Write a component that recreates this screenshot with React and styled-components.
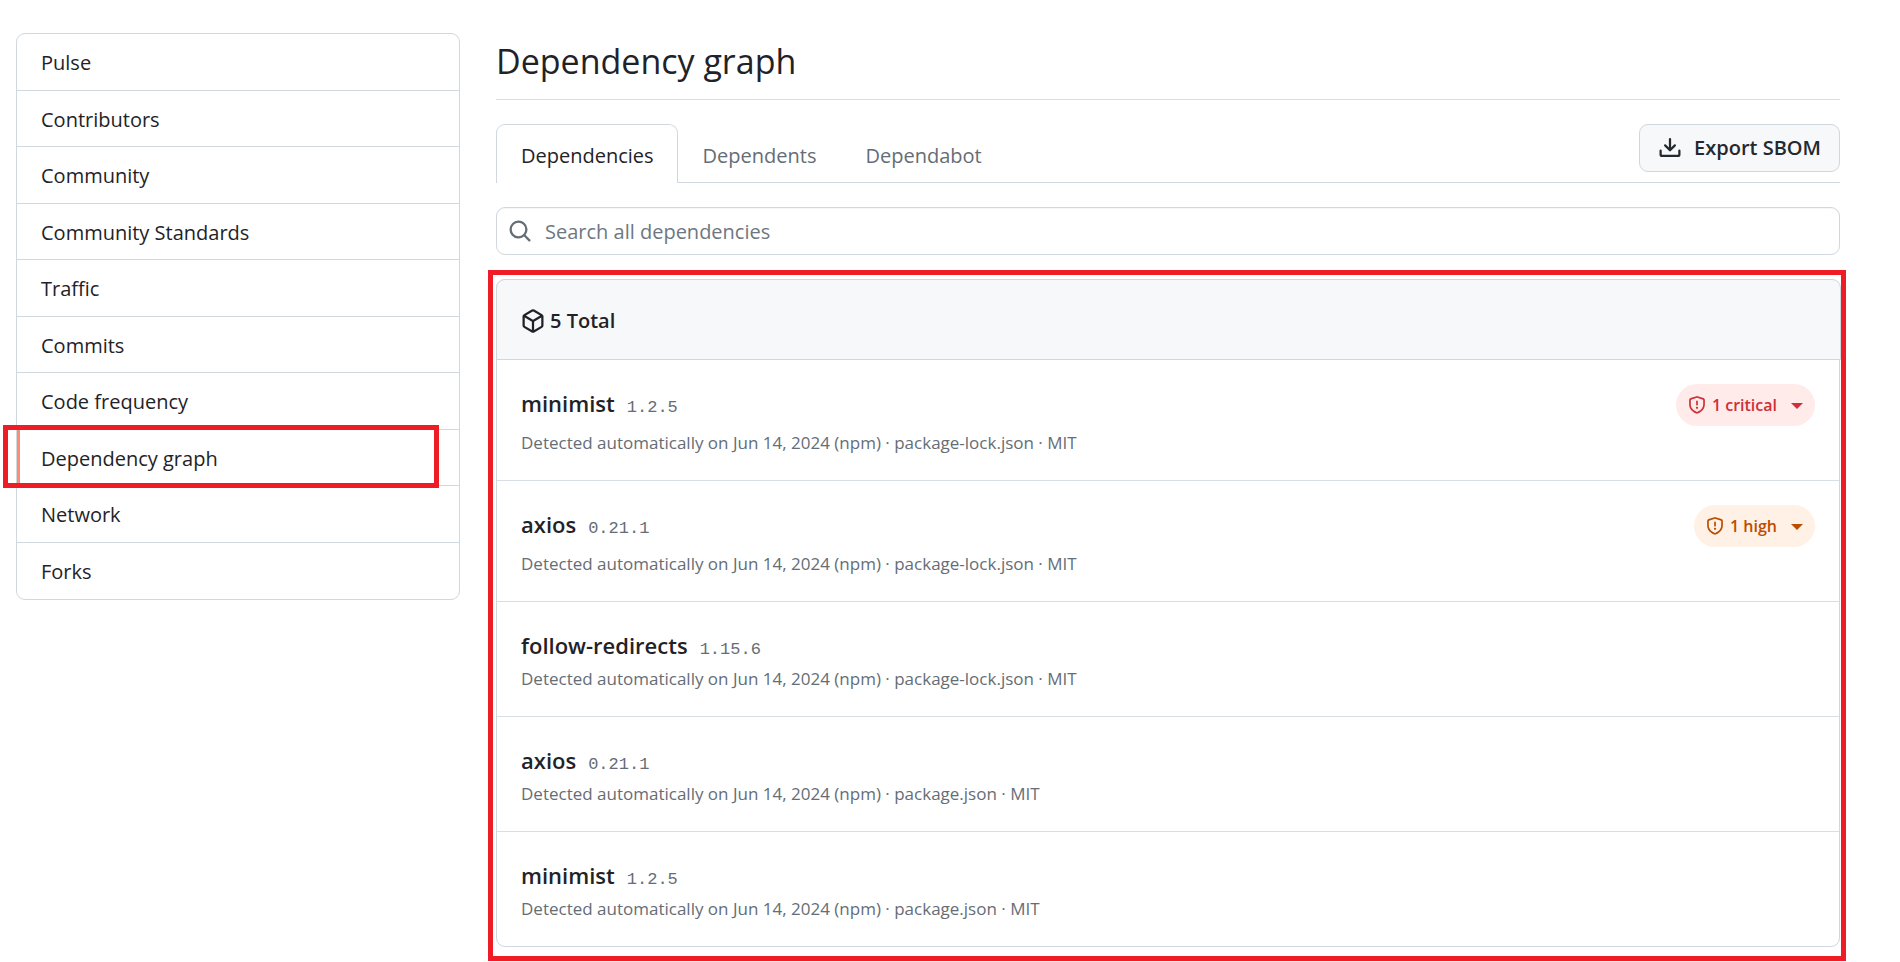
import React from "react";
import styled, { createGlobalStyle } from "styled-components";

const GlobalStyle = createGlobalStyle`
  *, *::before, *::after { box-sizing: border-box; }
  body {
    margin: 0;
    background: #ffffff;
    color: #1f2328;
    font-family: "Open Sans", "Noto Sans", sans-serif;
    font-size: 20px;
    line-height: 30px;
  }
  a { color: inherit; text-decoration: none; }
  button, input { font: inherit; }
`;

const Page = styled.div`
  display: grid;
  grid-template-columns: 444px minmax(0, 1fr);
  align-items: start;
  gap: 36px;
  padding: 33px 60px 15px 16px;
`;

const Menu = styled.ul`
  list-style: none;
  margin: 0;
  padding: 0;
  border: 1px solid #d0d7de;
  border-radius: 9px;
`;

const MenuItem = styled.li`
  position: relative;
  display: flex;
  height: 56px;
  border-bottom: 1px solid #d0d7de;
  box-shadow: ${(p) => (p.$selected ? "inset 3px 0 0 #fd8c73" : "none")};
  &:nth-child(odd) { height: 57px; }
  &:last-child { border-bottom: 0; }
`;

const MenuLink = styled.a`
  flex: 1;
  display: flex;
  align-items: center;
  padding: 2px 24px 0;
`;

const Highlight = styled.div`
  position: absolute;
  inset: ${(p) => p.$inset};
  border: 5px solid #ee1c25;
  pointer-events: none;
`;

const Title = styled.h1`
  margin: 0;
  padding-bottom: 10px;
  border-bottom: 1px solid #d8dee4;
  font-size: 34px;
  line-height: 56px;
  font-weight: 400;
`;

const TabBar = styled.div`
  display: flex;
  justify-content: space-between;
  align-items: flex-start;
  margin: 24px 0;
  border-bottom: 1px solid #d0d7de;
`;

const Tabs = styled.nav`
  display: flex;
  margin-bottom: -1px;
`;

const Tab = styled.a`
  padding: 16px 23px 12px 24px;
  border: 1px solid ${(p) => (p.$selected ? "#d0d7de" : "transparent")};
  border-bottom: 0;
  border-radius: 9px 9px 0 0;
  background: ${(p) => (p.$selected ? "#ffffff" : "transparent")};
  color: ${(p) => (p.$selected ? "#1f2328" : "#656d76")};
`;

const ExportButton = styled.button`
  display: flex;
  align-items: center;
  gap: 12px;
  height: 48px;
  padding: 0 18px;
  border: 1px solid #d0d7de;
  border-radius: 9px;
  background: #f6f8fa;
  color: #24292f;
  font-weight: 600;
`;

const SearchField = styled.label`
  display: flex;
  align-items: center;
  gap: 13px;
  height: 48px;
  margin-bottom: 24px;
  padding: 0 11px;
  border: 1px solid #d0d7de;
  border-radius: 9px;
  box-shadow: inset 0 1px 0 rgba(208, 215, 222, 0.2);
  color: #656d76;
`;

const SearchInput = styled.input`
  flex: 1;
  min-width: 0;
  padding: 2px 0 0;
  border: 0;
  outline: 0;
  background: transparent;
  color: #1f2328;
  &::placeholder { color: #6e7781; opacity: 1; }
`;

const Box = styled.section`
  position: relative;
  border: 1px solid #d0d7de;
  border-radius: 9px;
`;

const BoxHeader = styled.header`
  display: flex;
  align-items: center;
  gap: 5px;
  margin: -1px -2px 0 -1px;
  padding: 26px 24px 24px;
  border: 1px solid #d0d7de;
  border-radius: 9px 9px 0 0;
  background: #f6f8fa;
`;

const BoxTitle = styled.h2`
  margin: 0;
  font-size: 20px;
  line-height: 29px;
  font-weight: 600;
`;

const Rows = styled.ul`
  list-style: none;
  margin: 0;
  padding: 0;
`;

const Row = styled.li`
  padding: 24px;
  & + & { border-top: 1px solid #d8dee4; }
`;

const RowHead = styled.div`
  display: flex;
  align-items: flex-start;
  justify-content: space-between;
`;

const Name = styled.h3`
  display: flex;
  align-items: baseline;
  gap: 12px;
  margin: 0;
  padding-top: 2px;
  font-size: 22px;
  line-height: 34px;
  font-weight: 600;
`;

const Version = styled.span`
  color: #656d76;
  font-family: "Liberation Mono", monospace;
  font-size: 17px;
  line-height: 20px;
  font-weight: 400;
`;

const Meta = styled.p`
  margin: 0;
  padding-top: 4px;
  color: #656d76;
  font-size: 17px;
  line-height: 26px;
`;

const Badge = styled.button`
  display: flex;
  align-items: center;
  gap: 6px;
  height: 42px;
  padding: 0 12px;
  border: 0;
  border-radius: 21px;
  background: ${(p) => (p.$level === "critical" ? "#ffebe9" : "#fff1e5")};
  color: ${(p) => (p.$level === "critical" ? "#cf2f36" : "#bc4c00")};
  font-size: 16px;
  font-weight: 600;
`;

const Caret = styled.span`
  margin: 2px 0 0 8px;
  border: 6px solid transparent;
  border-top-color: currentColor;
  border-bottom: 0;
`;

const ICONS = {
  search:
    "M10.68 11.74a6 6 0 0 1-7.922-8.982 6 6 0 0 1 8.982 7.922l3.04 3.04a.749.749 0 0 1-.326 1.275.749.749 0 0 1-.734-.215ZM11.5 7a4.499 4.499 0 1 0-8.997 0A4.499 4.499 0 0 0 11.5 7Z",
  download:
    "M2.75 14A1.75 1.75 0 0 1 1 12.25v-2.5a.75.75 0 0 1 1.5 0v2.5c0 .138.112.25.25.25h10.5a.25.25 0 0 0 .25-.25v-2.5a.75.75 0 0 1 1.5 0v2.5A1.75 1.75 0 0 1 13.25 14ZM7.25 7.689V2a.75.75 0 0 1 1.5 0v5.689l1.97-1.969a.749.749 0 1 1 1.06 1.06l-3.25 3.25a.749.749 0 0 1-1.06 0L4.22 6.78a.749.749 0 1 1 1.06-1.06l1.97 1.969Z",
  package:
    "m8.878.392 5.25 3.045c.54.314.872.89.872 1.514v6.098a1.75 1.75 0 0 1-.872 1.514l-5.25 3.045a1.75 1.75 0 0 1-1.756 0l-5.25-3.045A1.75 1.75 0 0 1 1 11.049V4.951c0-.624.332-1.201.872-1.514L7.122.392a1.75 1.75 0 0 1 1.756 0ZM7.875 1.69l-4.63 2.685L8 7.133l4.755-2.758-4.63-2.685a.248.248 0 0 0-.25 0ZM2.5 5.677v5.372c0 .09.047.171.125.216l4.625 2.683V8.432Zm6.25 8.271 4.625-2.683a.25.25 0 0 0 .125-.216V5.677L8.75 8.432Z",
  shield:
    "M7.467.133a1.748 1.748 0 0 1 1.066 0l5.25 1.68A1.75 1.75 0 0 1 15 3.48V7c0 1.566-.32 3.182-1.303 4.682-.983 1.498-2.585 2.813-5.032 3.855a1.697 1.697 0 0 1-1.33 0c-2.447-1.042-4.049-2.357-5.032-3.855C1.32 10.182 1 8.566 1 7V3.48a1.75 1.75 0 0 1 1.217-1.667Zm.61 1.429a.25.25 0 0 0-.153 0l-5.25 1.68a.25.25 0 0 0-.174.238V7c0 1.358.275 2.666 1.057 3.86.784 1.194 2.121 2.34 4.366 3.297a.196.196 0 0 0 .154 0c2.245-.956 3.582-2.104 4.366-3.298C13.225 9.666 13.5 8.36 13.5 7V3.48a.251.251 0 0 0-.174-.237l-5.25-1.68ZM8.75 4.75v3a.75.75 0 0 1-1.5 0v-3a.75.75 0 0 1 1.5 0ZM9 10.5a1 1 0 1 1-2 0 1 1 0 0 1 2 0Z",
};

const IconSvg = styled.svg`
  flex: none;
  display: block;
  fill: currentColor;
`;

function Icon({ name, size = 24 }) {
  return (
    <IconSvg width={size} height={size} viewBox="0 0 16 16" aria-hidden="true">
      <path d={ICONS[name]} />
    </IconSvg>
  );
}

const MENU = [
  "Pulse",
  "Contributors",
  "Community",
  "Community Standards",
  "Traffic",
  "Commits",
  "Code frequency",
  "Dependency graph",
  "Network",
  "Forks",
];

const TABS = ["Dependencies", "Dependents", "Dependabot"];

const PACKAGES = [
  { name: "minimist", version: "1.2.5", file: "package-lock.json", level: "critical" },
  { name: "axios", version: "0.21.1", file: "package-lock.json", level: "high" },
  { name: "follow-redirects", version: "1.15.6", file: "package-lock.json" },
  { name: "axios", version: "0.21.1", file: "package.json" },
  { name: "minimist", version: "1.2.5", file: "package.json" },
];

export default function App() {
  return (
    <>
      <GlobalStyle />
      <Page>
        <nav aria-label="Insights">
          <Menu>
            {MENU.map((label) => {
              const selected = label === "Dependency graph";
              return (
                <MenuItem key={label} $selected={selected}>
                  <MenuLink href="#" aria-current={selected ? "page" : undefined}>
                    {label}
                  </MenuLink>
                  {selected && <Highlight $inset="-5px 20px -3px -14px" />}
                </MenuItem>
              );
            })}
          </Menu>
        </nav>
        <main>
          <Title>Dependency graph</Title>
          <TabBar>
            <Tabs aria-label="Dependency graph views">
              {TABS.map((label, i) => (
                <Tab key={label} href="#" $selected={i === 0}>
                  {label}
                </Tab>
              ))}
            </Tabs>
            <ExportButton type="button">
              <Icon name="download" />
              Export SBOM
            </ExportButton>
          </TabBar>
          <SearchField>
            <Icon name="search" />
            <SearchInput
              type="text"
              placeholder="Search all dependencies"
              aria-label="Search all dependencies"
            />
          </SearchField>
          <Box>
            <BoxHeader>
              <Icon name="package" />
              <BoxTitle>5 Total</BoxTitle>
            </BoxHeader>
            <Rows>
              {PACKAGES.map((p, i) => (
                <Row key={i}>
                  <RowHead>
                    <Name>
                      {p.name}
                      <Version>{p.version}</Version>
                    </Name>
                    {p.level && (
                      <Badge type="button" $level={p.level}>
                        <Icon name="shield" size={18} />
                        1 {p.level}
                        <Caret />
                      </Badge>
                    )}
                  </RowHead>
                  <Meta>
                    Detected automatically on Jun 14, 2024 (npm) · {p.file} · MIT
                  </Meta>
                </Row>
              ))}
            </Rows>
            <Highlight $inset="-10px -7px -15px -9px" />
          </Box>
        </main>
      </Page>
    </>
  );
}
